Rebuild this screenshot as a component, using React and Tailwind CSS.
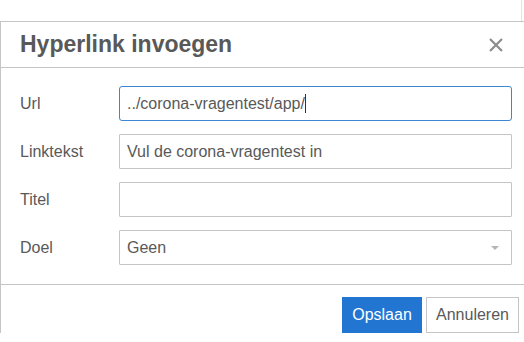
import React from 'react'

const fields = [
    { label: 'Url', value: '../corona-vragentest/app/', focused: true },
    { label: 'Linktekst', value: 'Vul de corona-vragentest in' },
    { label: 'Titel', value: '' },
]

export default function App() {
    return (
        <div className="w-[524px] h-[342px] overflow-hidden bg-white font-['Liberation_Sans',Arial,sans-serif]">
            {/* editor behind the dialog */}
            <div className="h-[21px] w-[522px] border-r border-[#e3e3e3]"></div>

            <div className="w-[532px] border-t border-l border-[#c5c5c5]">
                {/* Header */}
                <div className="h-[46px] flex items-center justify-between pl-[19px] pr-[25px] border-b border-[#c5c5c5]">
                    <h1 className="text-[23px] font-bold text-[#595959] leading-none">Hyperlink invoegen</h1>
                    <svg width="14" height="14" viewBox="0 0 14 14" className="mr-[4px]">
                        <path d="M1 1 L13 13 M13 1 L1 13" stroke="#8c8c8c" strokeWidth="2.2" />
                    </svg>
                </div>

                {/* Body */}
                <div className="pt-[18px] pb-[19px] pl-[19px] flex flex-col gap-[13px] border-b border-[#c5c5c5]">
                    {fields.map((f) => (
                        <div key={f.label} className="flex items-center">
                            <label className="w-[99px] text-[16px] text-[#595959]">{f.label}</label>
                            <div
                                className={`w-[393px] h-[35px] flex items-center px-[7px] text-[16px] text-[#595959] bg-white border ${
                                    f.focused ? 'border-[#3b87d3] rounded-[3px]' : 'border-[#c5c5c5] rounded-[1px]'
                                }`}
                            >
                                {f.value}
                                {f.focused && <span className="inline-block w-px h-[19px] bg-[#333]"></span>}
                            </div>
                        </div>
                    ))}
                    <div className="flex items-center">
                        <label className="w-[99px] text-[16px] text-[#595959]">Doel</label>
                        <div className="w-[393px] h-[35px] flex items-center justify-between px-[7px] text-[16px] text-[#595959] bg-white border border-[#c5c5c5] rounded-[1px]">
                            <span>Geen</span>
                            <svg width="10" height="6" viewBox="0 0 10 6" className="mr-[4px]">
                                <path d="M1 1 L9 1 L5 5 Z" fill="#b5b5b5" />
                            </svg>
                        </div>
                    </div>
                </div>

                {/* Footer */}
                <div className="flex gap-[4px] pt-[12px] pl-[341px]">
                    <button className="h-[36px] w-[80px] bg-[#2276d2] text-white text-[16px] border border-[#2276d2]">
                        Opslaan
                    </button>
                    <button className="h-[36px] w-[93px] bg-white text-[#595959] text-[16px] border border-[#c5c5c5]">
                        Annuleren
                    </button>
                </div>
            </div>
        </div>
    )
}
